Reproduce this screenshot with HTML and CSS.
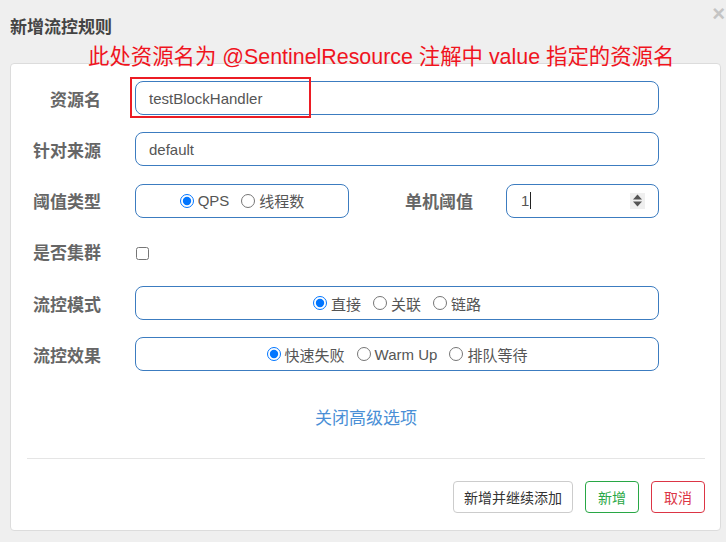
FILE: index.html
```html
<!DOCTYPE html>
<html>
<head>
    <meta charset="utf-8">
    <meta name="viewport" content="width=device-width, initial-scale=1.0">
    <link rel="stylesheet" href="styles.css">
</head>
<body>
    <!-- 标题 -->
    <div class="dialog-title">新增流控规则</div>
    <span class="dialog-close">&times;</span>
    <div class="note">此处资源名为 @SentinelResource 注解中 value 指定的资源名</div>

    <!-- 表单 -->
    <div class="card">
        <div class="form">
            <div class="form-row">
                <label class="form-label">资源名</label>
                <div class="field-wrap">
                    <div class="field">testBlockHandler</div>
                    <span class="mark"></span>
                </div>
            </div>
            <div class="form-row">
                <label class="form-label">针对来源</label>
                <div class="field">default</div>
            </div>
            <div class="form-row">
                <label class="form-label">阈值类型</label>
                <div class="field radio-box small">
                    <label class="radio"><input type="radio" name="grade" checked>QPS</label>
                    <label class="radio"><input type="radio" name="grade">线程数</label>
                </div>
                <label class="form-label wide">单机阈值</label>
                <div class="field number">
                    <span>1</span><span class="caret"></span>
                    <span class="spin">
                        <svg width="11" height="15" viewBox="0 0 11 15">
                            <path d="M5.5 1.5L10 6.5H1Z" fill="#555" />
                            <path d="M5.5 13.5L10 8.5H1Z" fill="#555" />
                        </svg>
                    </span>
                </div>
            </div>
            <div class="form-row">
                <label class="form-label">是否集群</label>
                <input type="checkbox" class="check">
            </div>
            <div class="form-row">
                <label class="form-label">流控模式</label>
                <div class="field radio-box">
                    <label class="radio"><input type="radio" name="strategy" checked>直接</label>
                    <label class="radio"><input type="radio" name="strategy">关联</label>
                    <label class="radio"><input type="radio" name="strategy">链路</label>
                </div>
            </div>
            <div class="form-row">
                <label class="form-label">流控效果</label>
                <div class="field radio-box">
                    <label class="radio"><input type="radio" name="behavior" checked>快速失败</label>
                    <label class="radio"><input type="radio" name="behavior">Warm Up</label>
                    <label class="radio"><input type="radio" name="behavior">排队等待</label>
                </div>
            </div>
        </div>

        <div class="toggle"><a href="#">关闭高级选项</a></div>

        <div class="footer">
            <button class="btn btn-default">新增并继续添加</button>
            <button class="btn btn-green">新增</button>
            <button class="btn btn-red">取消</button>
        </div>
    </div>
</body>
</html>
```

FILE: styles.css
```css
/* 全局 */
body {
    margin: 0;
    background-color: #efefef;
    font-family: 'Liberation Sans', Arial, 'Noto Sans CJK SC', sans-serif;
    color: #555;
    position: relative;
    height: 542px;
    overflow: hidden;
}

.dialog-title {
    padding: 18px 0 0 10px;
    font-size: 17px;
    line-height: 20px;
    font-weight: bold;
    color: #444;
}

.dialog-close {
    position: absolute;
    top: 3px;
    right: 1px;
    font-size: 22px;
    line-height: 22px;
    color: #c4c4c4;
    font-weight: bold;
}

/* 红色标注 */
.note {
    position: absolute;
    left: 88px;
    top: 44px;
    font-size: 21.4px;
    line-height: 26px;
    color: #f0141e;
    white-space: nowrap;
    z-index: 2;
}

.card {
    margin: 25px 5px 0 10px;
    background-color: #fff;
    border: 1px solid #dcdcdc;
    border-radius: 4px;
    height: 466px;
}

.form {
    padding: 17px 61px 0 20px;
}

.form-row {
    display: flex;
    align-items: center;
    height: 34px;
    margin-bottom: 17.25px;
}

.form-label {
    width: 70px;
    margin-right: 34px;
    text-align: right;
    font-size: 17px;
    font-weight: bold;
    color: #666;
    flex-shrink: 0;
}

    .form-label.wide {
        width: 123px;
        margin-left: 1px;
        margin-right: 33px;
    }

.field-wrap {
    position: relative;
    flex: 1;
    display: flex;
}

.field {
    flex: 1;
    height: 32px;
    border: 1px solid #3c7cc0;
    border-radius: 8px;
    padding: 0 13px;
    display: flex;
    align-items: center;
    font-size: 15px;
    color: #555;
}

.mark {
    position: absolute;
    left: -5px;
    top: -4px;
    width: 177px;
    height: 37px;
    border: 2px solid #ec1c24;
}

/* 单选框 */
.radio-box {
    justify-content: center;
    gap: 12px;
}

    .radio-box.small {
        flex: 0 0 186px;
    }

.radio {
    display: flex;
    align-items: center;
    font-size: 15px;
    color: #555;
}

    .radio input {
        width: 14px;
        height: 14px;
        margin: 0 4px 0 0;
        accent-color: #0075ff;
    }

.number {
    padding-left: 14px;
}

.caret {
    width: 1px;
    height: 17px;
    background-color: #222;
    margin-left: 1px;
}

.spin {
    margin-left: auto;
    width: 15px;
    height: 16px;
    background-color: #efefef;
    display: flex;
    align-items: center;
    justify-content: center;
}

.check {
    width: 13px;
    height: 13px;
    margin: 4px 0 0 1px;
}

/* 高级选项 */
.toggle {
    text-align: center;
    margin-top: 36px;
    padding-bottom: 27px;
    border-bottom: 1px solid #e5e5e5;
    margin-left: 16px;
    margin-right: 15px;
    font-size: 17px;
    line-height: 24px;
}

    .toggle a {
        color: #4a8fd6;
        text-decoration: none;
    }

.footer {
    display: flex;
    justify-content: flex-end;
    gap: 12px;
    padding: 22px 15px 0 0;
}

.btn {
    height: 32px;
    background-color: #fff;
    border: 1px solid #ccc;
    border-radius: 4px;
    padding: 0 10px;
    font-family: inherit;
    font-size: 14px;
    color: #333;
    cursor: pointer;
}

.btn-green {
    border-color: #28a745;
    color: #28a745;
    padding: 0 12px;
}

.btn-red {
    border-color: #dc3545;
    color: #dc3545;
    padding: 0 12px;
}
```
